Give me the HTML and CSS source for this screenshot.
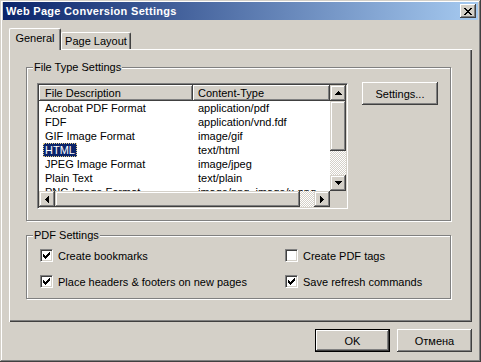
FILE: index.html
```html
<!DOCTYPE html>
<html lang="en">

<head>
    <meta charset="UTF-8">
    <title>Web Page Conversion Settings</title>
    <link rel="stylesheet" href="styles.css">
</head>

<body>
    <div class="window">
        <div class="titlebar">
            <span class="title">Web Page Conversion Settings</span>
            <span class="close-btn">
                <svg width="8" height="7" viewBox="0 0 8 7" shape-rendering="crispEdges">
                    <path d="M0 0h2v1h-2z M6 0h2v1h-2z M1 1h2v1h-2z M5 1h2v1h-2z M2 2h4v1h-4z M3 3h2v1h-2z M2 4h4v1h-4z M1 5h2v1h-2z M5 5h2v1h-2z M0 6h2v1h-2z M6 6h2v1h-2z" />
                </svg>
            </span>
        </div>

        <div class="content">
            <div class="tabs">
                <div class="tab active">General</div>
                <div class="tab layout-tab">Page Layout</div>
            </div>

            <div class="panel">
                <!-- file types -->
                <div class="group file-group">
                    <span class="group-label">File Type Settings</span>
                    <div class="file-row">
                        <div class="listbox">
                            <div class="listview">
                                <div class="list-head">
                                    <span class="head-cell col1">File Description</span>
                                    <span class="head-cell col2">Content-Type</span>
                                </div>
                                <div class="list-row"><span class="col1">Acrobat PDF Format</span><span class="col2">application/pdf</span></div>
                                <div class="list-row"><span class="col1">FDF</span><span class="col2">application/vnd.fdf</span></div>
                                <div class="list-row"><span class="col1">GIF Image Format</span><span class="col2">image/gif</span></div>
                                <div class="list-row"><span class="col1"><span class="selected">HTML</span></span><span class="col2">text/html</span></div>
                                <div class="list-row"><span class="col1">JPEG Image Format</span><span class="col2">image/jpeg</span></div>
                                <div class="list-row"><span class="col1">Plain Text</span><span class="col2">text/plain</span></div>
                                <div class="list-row"><span class="col1">PNG Image Format</span><span class="col2">image/png, image/x-png</span></div>
                            </div>
                            <div class="vscroll">
                                <span class="sb-btn">
                                    <svg width="7" height="4" viewBox="0 0 7 4" shape-rendering="crispEdges"><path d="M3 0h1v1h-1z M2 1h3v1h-3z M1 2h5v1h-5z M0 3h7v1h-7z" /></svg>
                                </span>
                                <span class="sb-thumb"></span>
                                <span class="sb-track"></span>
                                <span class="sb-btn">
                                    <svg width="7" height="4" viewBox="0 0 7 4" shape-rendering="crispEdges"><path d="M0 0h7v1h-7z M1 1h5v1h-5z M2 2h3v1h-3z M3 3h1v1h-1z" /></svg>
                                </span>
                            </div>
                            <div class="hscroll">
                                <span class="sb-btn">
                                    <svg width="4" height="7" viewBox="0 0 4 7" shape-rendering="crispEdges"><path d="M3 0h1v7h-1z M2 1h1v5h-1z M1 2h1v3h-1z M0 3h1v1h-1z" /></svg>
                                </span>
                                <span class="sb-thumb"></span>
                                <span class="sb-track"></span>
                                <span class="sb-btn">
                                    <svg width="4" height="7" viewBox="0 0 4 7" shape-rendering="crispEdges"><path d="M0 0h1v7h-1z M1 1h1v5h-1z M2 2h1v3h-1z M3 3h1v1h-1z" /></svg>
                                </span>
                            </div>
                            <div class="sb-corner"></div>
                        </div>
                        <button class="btn settings-btn">Settings...</button>
                    </div>
                </div>

                <!-- pdf options -->
                <div class="group pdf-group">
                    <span class="group-label">PDF Settings</span>
                    <div class="checks">
                        <label class="check-item"><span class="check"><svg width="7" height="7" viewBox="0 0 7 7" shape-rendering="crispEdges"><path d="M6 0h1v1h-1z M5 1h2v1h-2z M0 2h1v1h-1z M4 2h3v1h-3z M0 3h2v1h-2z M3 3h3v1h-3z M0 4h5v1h-5z M1 5h3v1h-3z M2 6h1v1h-1z" /></svg></span>Create bookmarks</label>
                        <label class="check-item"><span class="check"></span>Create PDF tags</label>
                        <label class="check-item"><span class="check"><svg width="7" height="7" viewBox="0 0 7 7" shape-rendering="crispEdges"><path d="M6 0h1v1h-1z M5 1h2v1h-2z M0 2h1v1h-1z M4 2h3v1h-3z M0 3h2v1h-2z M3 3h3v1h-3z M0 4h5v1h-5z M1 5h3v1h-3z M2 6h1v1h-1z" /></svg></span>Place headers &amp; footers on new pages</label>
                        <label class="check-item"><span class="check"><svg width="7" height="7" viewBox="0 0 7 7" shape-rendering="crispEdges"><path d="M6 0h1v1h-1z M5 1h2v1h-2z M0 2h1v1h-1z M4 2h3v1h-3z M0 3h2v1h-2z M3 3h3v1h-3z M0 4h5v1h-5z M1 5h3v1h-3z M2 6h1v1h-1z" /></svg></span>Save refresh commands</label>
                    </div>
                </div>
            </div>

            <div class="actions">
                <button class="btn default">OK</button>
                <button class="btn">Отмена</button>
            </div>
        </div>
    </div>
</body>

</html>
```

FILE: styles.css
```css
* {
    box-sizing: border-box;
}

body {
    margin: 0;
    background: #d4d0c8;
    font-family: "Liberation Sans", Arial, sans-serif;
    font-size: 11px;
    color: #000;
}

.window {
    width: 481px;
    height: 362px;
    padding: 2px 3px 3px;
    display: flex;
    flex-direction: column;
    background: #d4d0c8;
    box-shadow: inset -1px -1px #404040, inset 1px 1px #d4d0c8, inset -2px -2px #808080, inset 2px 2px #fff;
}

/* title bar */
.titlebar {
    height: 18px;
    display: flex;
    align-items: center;
    justify-content: space-between;
    padding: 0 2px 0 3px;
    background: linear-gradient(to right, #0a246a, #a6caf0);
}

.title {
    color: #fff;
    font-weight: bold;
    letter-spacing: 0.3px;
}

.close-btn {
    width: 16px;
    height: 14px;
    display: flex;
    align-items: center;
    justify-content: center;
    background: #d4d0c8;
    box-shadow: inset -1px -1px #404040, inset 1px 1px #fff, inset -2px -2px #808080;
}

.content {
    padding: 8px 6px 0;
}

/* tabs */
.tabs {
    height: 21px;
    display: flex;
    align-items: flex-end;
}

.tab {
    height: 17px;
    line-height: 16px;
    text-align: center;
    border: 1px solid;
    border-color: #fff #404040 transparent #fff;
    border-bottom: 0;
    border-radius: 2px 2px 0 0;
    box-shadow: inset -1px 0 #808080;
    background: #d4d0c8;
}

.tab.active {
    width: 52px;
    height: 22px;
    margin-bottom: -1px;
    line-height: 19px;
    position: relative;
}

.layout-tab {
    width: 70px;
}

.panel {
    height: 273px;
    padding: 18px 21px 0 17px;
    box-shadow: inset 1px 1px #fff, inset -1px -1px #404040, inset -2px -2px #808080;
}

/* group boxes */
.group {
    position: relative;
    border: 1px solid #808080;
    box-shadow: inset 1px 1px #fff, 1px 1px #fff;
}

.group-label {
    position: absolute;
    top: -7px;
    left: 6px;
    padding: 0 1px;
    line-height: 13px;
    background: #d4d0c8;
}

.file-group {
    padding: 15px 10px 11px;
}

.file-row {
    display: flex;
    align-items: flex-start;
}

.listbox {
    width: 311px;
    height: 126px;
    padding: 1px;
    display: grid;
    grid-template-columns: 1fr 16px;
    grid-template-rows: 1fr 16px;
    background: #fff;
    border: 1px solid;
    border-color: #808080 #fff #fff #808080;
    box-shadow: inset 1px 1px #404040, inset -1px -1px #d4d0c8;
}

.listview {
    overflow: hidden;
    background: #fff;
}

.list-head,
.list-row {
    display: grid;
    grid-template-columns: 154px 1fr;
    white-space: nowrap;
}

.head-cell {
    height: 16px;
    line-height: 16px;
    background: #d4d0c8;
    box-shadow: inset -1px -1px #404040, inset 1px 1px #fff, inset -2px -2px #808080;
}

.list-row {
    height: 14px;
    line-height: 14px;
}

.col1 {
    padding-left: 6px;
}

.col2 {
    padding-left: 5px;
}

.selected {
    display: inline-block;
    height: 14px;
    margin-left: -2px;
    padding: 0 2px;
    color: #fff;
    background: #0a246a;
    outline: 1px dotted #e8d088;
    outline-offset: -1px;
}

/* scroll bars */
.vscroll,
.hscroll {
    display: flex;
}

.vscroll {
    flex-direction: column;
}

.sb-btn,
.sb-thumb {
    flex: none;
    width: 16px;
    height: 16px;
    display: flex;
    align-items: center;
    justify-content: center;
    background: #d4d0c8;
    box-shadow: inset -1px -1px #404040, inset 1px 1px #d4d0c8, inset -2px -2px #808080, inset 2px 2px #fff;
}

.vscroll .sb-thumb {
    height: 50px;
}

.hscroll .sb-thumb {
    width: 245px;
}

.sb-track {
    flex: 1;
    background: repeating-conic-gradient(#fff 0 25%, #d4d0c8 0 50%) 0 0 / 2px 2px;
}

.sb-corner {
    background: #d4d0c8;
}

/* buttons */
.btn {
    width: 75px;
    height: 23px;
    padding: 0;
    border: 0;
    font: inherit;
    color: #000;
    background: #d4d0c8;
    box-shadow: inset -1px -1px #404040, inset 1px 1px #fff, inset -2px -2px #808080;
}

.btn.default {
    border: 1px solid #000;
}

.settings-btn {
    width: 76px;
    margin: -1px 0 0 14px;
}

/* checkboxes */
.pdf-group {
    margin-top: 14px;
    padding: 13px 10px 10px 13px;
}

.checks {
    display: grid;
    grid-template-columns: 245px auto;
    row-gap: 13px;
}

.check-item {
    height: 13px;
    display: flex;
    align-items: center;
    gap: 5px;
    white-space: nowrap;
}

.check {
    width: 13px;
    height: 13px;
    display: flex;
    align-items: center;
    justify-content: center;
    background: #fff;
    border: 1px solid;
    border-color: #808080 #fff #fff #808080;
    box-shadow: inset 1px 1px #404040, inset -1px -1px #d4d0c8;
}

.actions {
    display: flex;
    justify-content: flex-end;
    gap: 7px;
    margin-top: 7px;
}
```
